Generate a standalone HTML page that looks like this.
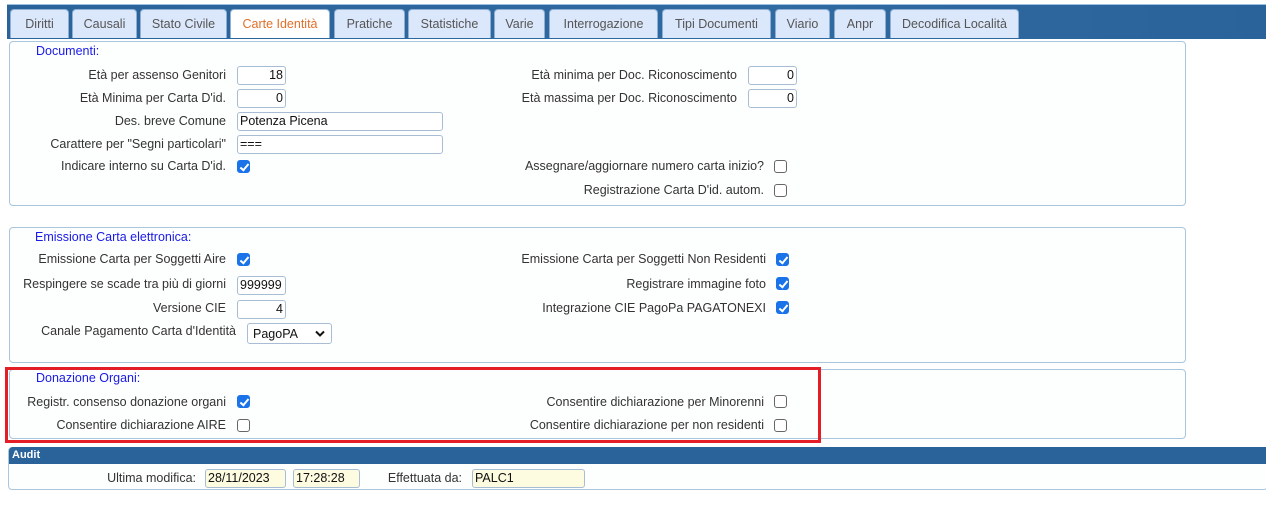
<!DOCTYPE html>
<html><head><meta charset="utf-8"><style>
body{margin:0;width:1266px;height:519px;background:#fff;font-family:"Liberation Sans",sans-serif;font-size:12px;color:#333;position:relative;overflow:hidden}
.a{position:absolute;white-space:nowrap}
.bar{position:absolute;left:7px;top:4px;width:1259px;height:34px;background:linear-gradient(90deg,#2a6399,#2f6aa0 60%,#2a6399);border-top:1px solid #9cc0e0}
.tab{position:absolute;top:9px;height:29px;background:#dbe7fa;border:1px solid #8fb0d4;border-bottom:none;border-radius:4px 4px 0 0;box-sizing:border-box;text-align:center;line-height:28px;color:#555;font-size:12.5px}
.tab.act{background:#fff;color:#e0702a}
.fs{position:absolute;border:1px solid #a9c6dd;border-radius:4px;background:#fdfefe;box-sizing:border-box}
.lg{position:absolute;color:#1a1ae6;font-size:12.5px}
.l{position:absolute;white-space:nowrap;text-align:right;font-size:12.5px;color:#333}
.in{position:absolute;height:19px;border:1px solid #a8bdd3;border-radius:3px;box-sizing:border-box;background:#fff;font-size:12.5px;line-height:17px;padding:0 2px;color:#111}
.r{text-align:right}
.cb{position:absolute;width:13px;height:13px;border:1px solid #666;border-radius:3px;box-sizing:border-box;background:#fff}
.cb.on{background:#1a73e8;border-color:#1a73e8}
.cb.on:after{content:"";position:absolute;left:3.5px;top:0.5px;width:3px;height:7px;border:solid #fff;border-width:0 2px 2px 0;transform:rotate(40deg)}
</style></head><body>
<div class="bar"></div>
<div class="tab" style="left:10px;width:59px">Diritti</div>
<div class="tab" style="left:72px;width:65px">Causali</div>
<div class="tab" style="left:140px;width:87px">Stato Civile</div>
<div class="tab act" style="left:230px;width:100px">Carte Identità</div>
<div class="tab" style="left:334px;width:71px">Pratiche</div>
<div class="tab" style="left:408px;width:83px">Statistiche</div>
<div class="tab" style="left:494px;width:51px">Varie</div>
<div class="tab" style="left:549px;width:109px">Interrogazione</div>
<div class="tab" style="left:662px;width:109px">Tipi Documenti</div>
<div class="tab" style="left:775px;width:55px">Viario</div>
<div class="tab" style="left:834px;width:52px">Anpr</div>
<div class="tab" style="left:890px;width:129px">Decodifica Località</div>

<div class="fs" style="left:9px;top:41px;width:1177px;height:165px"></div>
<div class="lg" style="left:36px;top:44px">Documenti:</div>
<div class="l" style="right:1040px;top:68px">Età per assenso Genitori</div>
<div class="in r" style="left:237px;top:66px;width:49px">18</div>
<div class="l" style="right:1040px;top:91px">Età Minima per Carta D'id.</div>
<div class="in r" style="left:237px;top:89px;width:49px">0</div>
<div class="l" style="right:1040px;top:114px">Des. breve Comune</div>
<div class="in" style="left:237px;top:112px;width:206px">Potenza Picena</div>
<div class="l" style="right:1040px;top:137px">Carattere per "Segni particolari"</div>
<div class="in" style="left:237px;top:135px;width:206px">===</div>
<div class="l" style="right:1040px;top:159px">Indicare interno su Carta D'id.</div>
<div class="cb on" style="left:237px;top:160px"></div>
<div class="l" style="right:529px;top:68px">Età minima per Doc. Riconoscimento</div>
<div class="in r" style="left:748px;top:66px;width:49px">0</div>
<div class="l" style="right:529px;top:91px">Età massima per Doc. Riconoscimento</div>
<div class="in r" style="left:748px;top:89px;width:49px">0</div>
<div class="l" style="right:502px;top:159px">Assegnare/aggiornare numero carta inizio?</div>
<div class="cb" style="left:774px;top:160px"></div>
<div class="l" style="right:502px;top:183px">Registrazione Carta D'id. autom.</div>
<div class="cb" style="left:774px;top:184px"></div>

<div class="fs" style="left:9px;top:227px;width:1177px;height:136px"></div>
<div class="lg" style="left:35px;top:230px">Emissione Carta elettronica:</div>
<div class="l" style="right:1040px;top:252px">Emissione Carta per Soggetti Aire</div>
<div class="cb on" style="left:237px;top:253px"></div>
<div class="l" style="right:1040px;top:277px">Respingere se scade tra più di giorni</div>
<div class="in" style="left:237px;top:276px;width:49px">999999</div>
<div class="l" style="right:1040px;top:301px">Versione CIE</div>
<div class="in r" style="left:237px;top:300px;width:49px">4</div>
<div class="l" style="right:1030px;top:324px">Canale Pagamento Carta d'Identità</div>
<div class="in" style="left:247px;top:323px;width:85px;height:21px;line-height:20px;padding-left:5px">PagoPA<svg style="position:absolute;right:6px;top:6px" width="10" height="7" viewBox="0 0 10 7"><path d="M1 1.5L5 5.5L9 1.5" fill="none" stroke="#111" stroke-width="2"/></svg></div>
<div class="l" style="right:500px;top:252px">Emissione Carta per Soggetti Non Residenti</div>
<div class="cb on" style="left:776px;top:253px"></div>
<div class="l" style="right:500px;top:277px">Registrare immagine foto</div>
<div class="cb on" style="left:776px;top:277px"></div>
<div class="l" style="right:500px;top:301px">Integrazione CIE PagoPa PAGATONEXI</div>
<div class="cb on" style="left:776px;top:301px"></div>

<div class="fs" style="left:9px;top:369px;width:1177px;height:70px"></div>
<div class="lg" style="left:36px;top:371px">Donazione Organi:</div>
<div class="l" style="right:1040px;top:395px">Registr. consenso donazione organi</div>
<div class="cb on" style="left:237px;top:395px"></div>
<div class="l" style="right:1040px;top:418px">Consentire dichiarazione AIRE</div>
<div class="cb" style="left:237px;top:419px"></div>
<div class="l" style="right:502px;top:395px">Consentire dichiarazione per Minorenni</div>
<div class="cb" style="left:774px;top:395px"></div>
<div class="l" style="right:502px;top:418px">Consentire dichiarazione per non residenti</div>
<div class="cb" style="left:774px;top:419px"></div>
<div class="a" style="left:5px;top:367px;width:810px;height:70px;border:3px solid #e41e26"></div>

<div class="fs" style="left:8px;top:447px;width:1260px;height:43px"></div>
<div class="a" style="left:9px;top:447px;width:1257px;height:17px;background:#2a6399;border-radius:4px 0 0 0;color:#fff;font-weight:bold;font-size:11px;line-height:17px;padding-left:3px;box-sizing:border-box">Audit</div>
<div class="l" style="right:1070px;top:471px">Ultima modifica:</div>
<div class="in" style="left:205px;top:469px;width:81px;background:#fdfbe0">28/11/2023</div>
<div class="in" style="left:293px;top:469px;width:67px;background:#fdfbe0">17:28:28</div>
<div class="l" style="right:804px;top:471px">Effettuata da:</div>
<div class="in" style="left:472px;top:469px;width:113px;background:#fdfbe0">PALC1</div>
</body></html>
